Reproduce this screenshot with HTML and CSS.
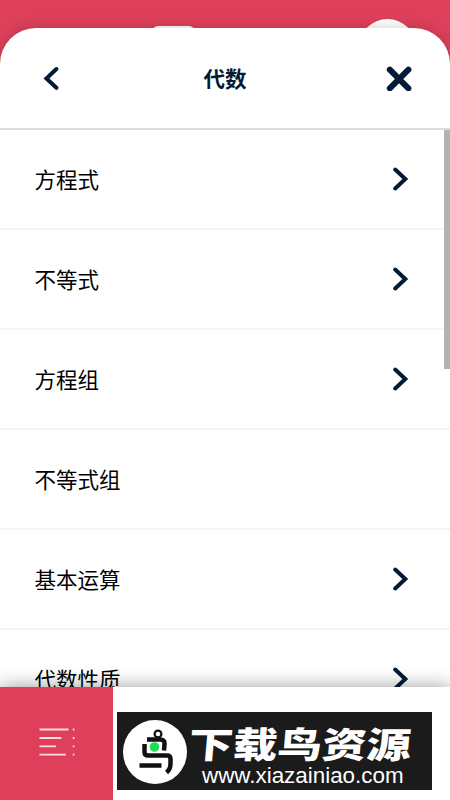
FILE: index.html
```html
<!DOCTYPE html>
<html lang="zh-CN">
<head>
    <meta charset="UTF-8">
    <meta name="viewport" content="width=device-width, initial-scale=1.0">
    <title>代数</title>
    <link rel="stylesheet" href="styles.css">
</head>
<body>
    <!-- Page behind the sheet -->
    <div class="backdrop-tab"></div>
    <div class="backdrop-circle"></div>

    <!-- Topic sheet -->
    <main class="sheet">
        <header class="sheet-header">
            <svg class="back-icon" viewBox="0 0 16 24"><path d="M13.4 3 3.4 12.5l10 9.3"/></svg>
            <h1 class="sheet-title">代数</h1>
            <svg class="close-icon" viewBox="0 0 26 26"><path d="M3.8 4.7l18.6 18.6M22.4 4.7l-18.6 18.6"/></svg>
        </header>
        <ul class="topic-list">
            <li class="topic">方程式<svg class="chevron" viewBox="0 0 16 24"><path d="M2.2 2.5 12.3 12l-10.1 9.5"/></svg></li>
            <li class="topic">不等式<svg class="chevron" viewBox="0 0 16 24"><path d="M2.2 2.5 12.3 12l-10.1 9.5"/></svg></li>
            <li class="topic">方程组<svg class="chevron" viewBox="0 0 16 24"><path d="M2.2 2.5 12.3 12l-10.1 9.5"/></svg></li>
            <li class="topic">不等式组</li>
            <li class="topic">基本运算<svg class="chevron" viewBox="0 0 16 24"><path d="M2.2 2.5 12.3 12l-10.1 9.5"/></svg></li>
            <li class="topic">代数性质<svg class="chevron" viewBox="0 0 16 24"><path d="M2.2 2.5 12.3 12l-10.1 9.5"/></svg></li>
        </ul>
        <div class="scrollbar"></div>
    </main>

    <!-- Bottom bar -->
    <footer class="bottom-bar">
        <div class="menu-tab">
            <svg class="menu-icon" viewBox="0 0 38 30">
                <path d="M1.5 2.5h29M1.5 11h22M1.5 19.3h16.5M1.5 27.7h26.5"/>
                <path class="menu-dots" d="M34.8 2.5h1.6M34.8 11h1.6M34.8 19.3h1.6M34.8 27.7h1.6"/>
            </svg>
        </div>
        <div class="banner">
            <svg class="banner-logo" viewBox="0 0 66 66">
                <circle cx="33" cy="33" r="32" fill="#fff"/>
                <circle class="logo-ring" cx="36" cy="15" r="3.4"/>
                <path class="logo-stroke" d="M25 20.5H38Q43 20.5 42.5 25L42 31.5M22.5 25V33Q22.5 36.5 26 36.5H45Q48.5 36.5 48.5 40V45Q48.5 50 44.5 53.5M17.5 46.5H39.5"/>
                <circle cx="32.5" cy="28" r="4.8" fill="#1edb59"/>
            </svg>
            <div class="banner-text">
                <div class="banner-name">下载鸟资源</div>
                <div class="banner-url">www.xiazainiao.com</div>
            </div>
        </div>
    </footer>
</body>
</html>
```

FILE: styles.css
```css
* {
    box-sizing: border-box;
}

body {
    margin: 0;
    height: 100vh;
    padding-top: 28px;
    background: #de405b;
    font-family: "Noto Sans CJK SC", sans-serif;
    overflow: hidden;
    display: flex;
    flex-direction: column;
    position: relative;
}

/* Parts of the page that peek out above the sheet */
.backdrop-tab {
    position: absolute;
    top: 26px;
    left: 152px;
    width: 43px;
    height: 20px;
    border-radius: 6px;
    background: #fff;
}

.backdrop-circle {
    position: absolute;
    top: 19px;
    left: 359px;
    width: 57px;
    height: 57px;
    border-radius: 50%;
    background: #fff;
}

/* Sheet */
.sheet {
    flex: 1;
    min-height: 0;
    overflow: hidden;
    position: relative;
    background: #fff;
    border-radius: 36px 36px 0 0;
    box-shadow: 0 0 14px rgba(0, 0, 0, 0.2);
}

.sheet-header {
    height: 102px;
    padding: 0 38px 0 43px;
    display: flex;
    align-items: center;
    justify-content: space-between;
    border-bottom: 2px solid #dcdcdc;
}

.sheet-title {
    margin: -1px 0 0 5px;
    font-size: 21.5px;
    line-height: 32px;
    font-weight: 700;
    color: #031b36;
}

.back-icon,
.close-icon,
.chevron {
    fill: none;
    stroke: #031b36;
    stroke-width: 4;
    stroke-linecap: round;
}

.back-icon,
.chevron {
    width: 16px;
    height: 24px;
}

.close-icon {
    width: 26px;
    height: 26px;
    stroke-width: 6;
}

.topic-list {
    margin: 0;
    padding: 0;
    list-style: none;
}

.topic {
    height: 100px;
    padding: 0 41px 2px 34.5px;
    display: flex;
    align-items: center;
    justify-content: space-between;
    border-bottom: 2px solid #f5f5f5;
    font-size: 21.5px;
    color: #000;
}

.chevron {
    margin-top: 2px;
}

.scrollbar {
    position: absolute;
    top: 102px;
    right: 0;
    width: 6px;
    height: 239px;
    background: #b3b3b3;
}

/* Bottom bar */
.bottom-bar {
    height: 113px;
    flex-shrink: 0;
    display: flex;
    position: relative;
    background: #fff;
    box-shadow: 0 0 18px rgba(0, 0, 0, 0.4);
}

.menu-tab {
    width: 113px;
    background: #de405b;
    display: flex;
    align-items: center;
    justify-content: center;
}

.menu-icon {
    width: 38px;
    height: 30px;
    margin-top: -3px;
    fill: none;
    stroke: #fadce1;
    stroke-width: 1.8;
}

.banner {
    width: 315px;
    height: 78px;
    margin: 25px 0 0 4px;
    padding-left: 5px;
    display: flex;
    background: #1b1b1b;
    color: #fff;
}

.banner-logo {
    width: 66px;
    height: 66px;
    margin-top: 7px;
    flex-shrink: 0;
}

.logo-stroke {
    fill: none;
    stroke: #111;
    stroke-width: 4.5;
}

.logo-ring {
    fill: none;
    stroke: #111;
    stroke-width: 2.2;
}

.banner-text {
    white-space: nowrap;
}

.banner-name {
    margin: 8px 0 0 1px;
    font-size: 39px;
    line-height: 45px;
    height: 43px;
    font-weight: 900;
    transform: skewX(-5deg) scale(1.14, 0.92);
    transform-origin: 0 50%;
}

.banner-url {
    margin: 1px 0 0 14px;
    font-family: "Liberation Sans", Arial, sans-serif;
    font-size: 22.4px;
    line-height: 24px;
}
```
